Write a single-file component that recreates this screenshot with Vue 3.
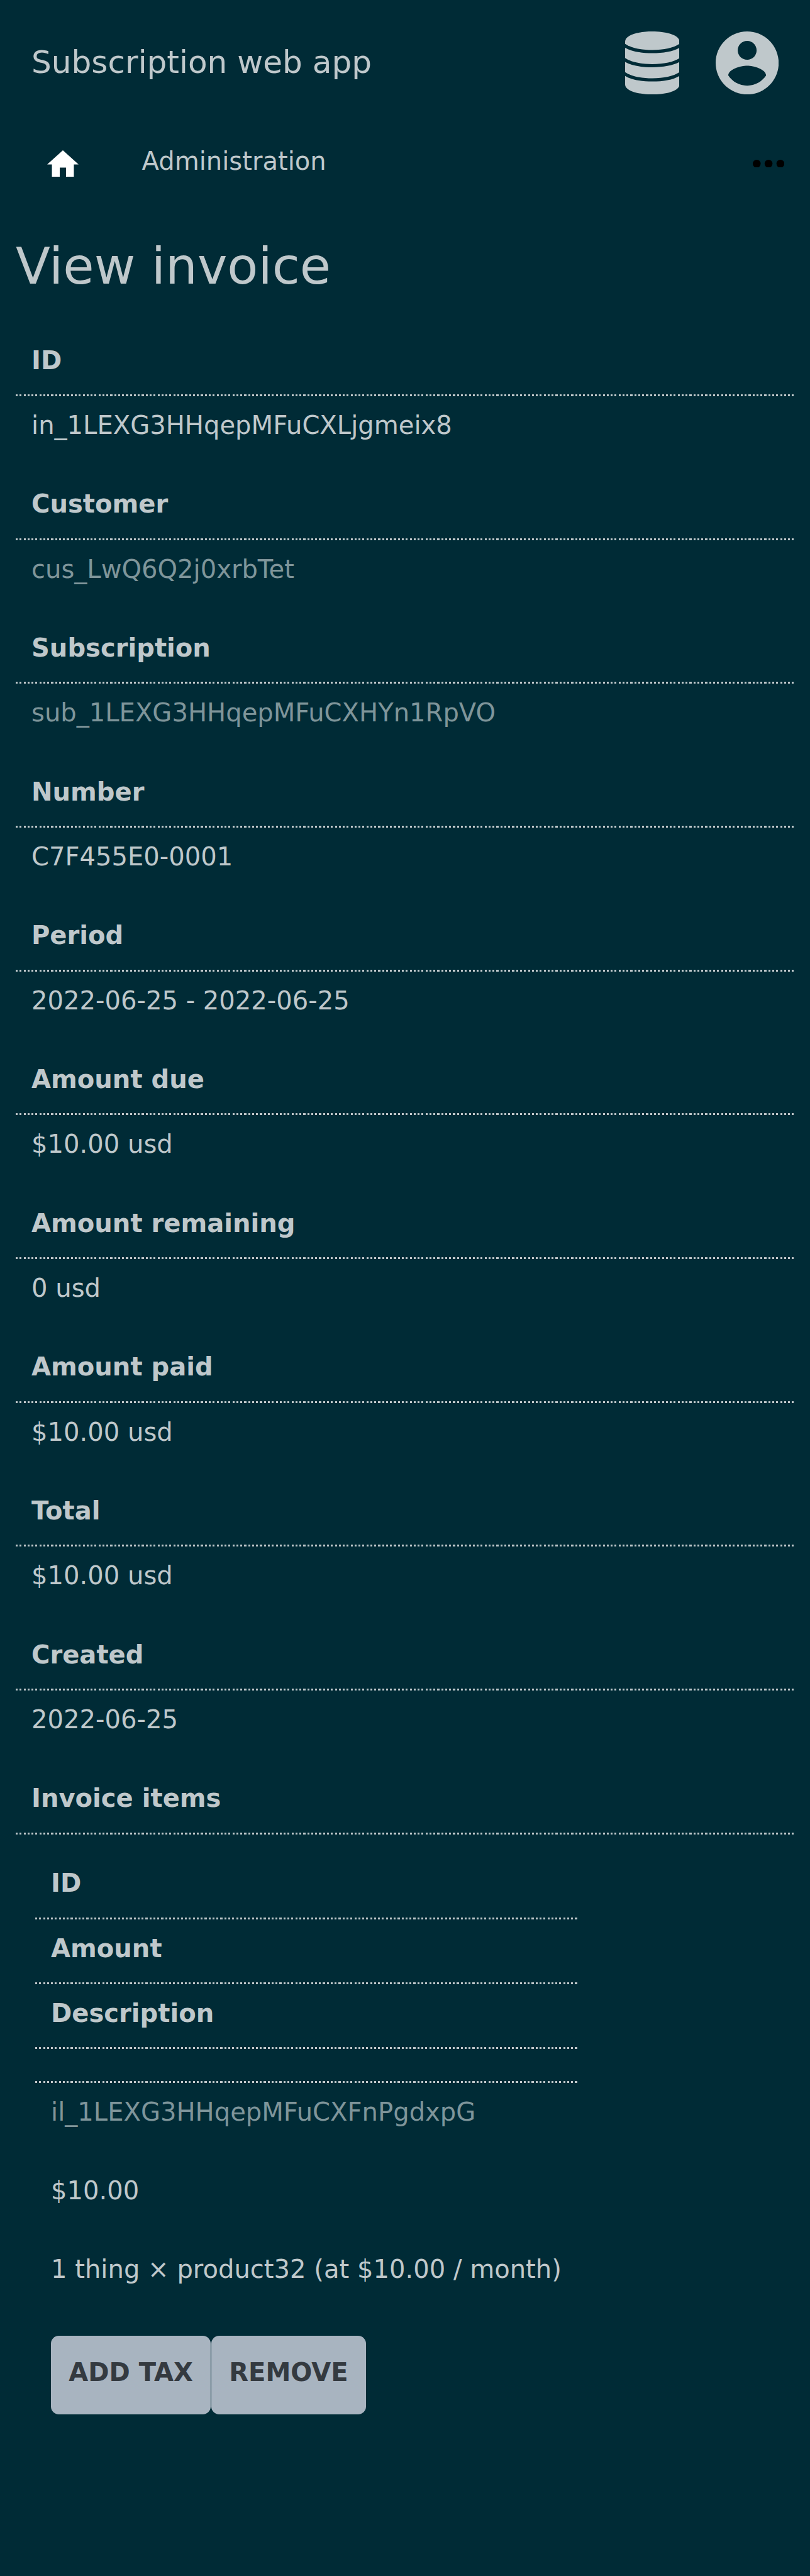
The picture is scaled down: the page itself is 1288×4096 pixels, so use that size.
<script setup>
const fields = [
  { label: 'ID', value: 'in_1LEXG3HHqepMFuCXLjgmeix8' },
  { label: 'Customer', value: 'cus_LwQ6Q2j0xrbTet', link: true },
  { label: 'Subscription', value: 'sub_1LEXG3HHqepMFuCXHYn1RpVO', link: true },
  { label: 'Number', value: 'C7F455E0-0001' },
  { label: 'Period', value: '2022-06-25 - 2022-06-25' },
  { label: 'Amount due', value: '$10.00 usd' },
  { label: 'Amount remaining', value: '0 usd' },
  { label: 'Amount paid', value: '$10.00 usd' },
  { label: 'Total', value: '$10.00 usd' },
  { label: 'Created', value: '2022-06-25' },
]
const itemColumns = ['ID', 'Amount', 'Description', '']
</script>

<template>
  <div class="page">
    <header class="header">
      <div class="brand">Subscription web app</div>
      <div class="tools">
        <svg class="database" viewBox="0 0 290 336" aria-hidden="true">
          <path d="M0 54C0 20 68 0 145 0s145 20 145 54v12c-28 20-83 33-145 33S28 86 0 66z" />
          <path d="M0 87c34 20 86 29 145 29s111-9 145-29v55c-28 20-83 32-145 32S28 162 0 142z" />
          <path d="M0 163c34 19 86 28 145 28s111-9 145-28v54c-28 20-83 33-145 33S28 237 0 217z" />
          <path d="M0 237c34 21 86 30 145 30s111-9 145-30v46c0 32-65 53-145 53S0 315 0 283z" />
        </svg>
        <svg class="account" viewBox="2 2 20 20" aria-hidden="true">
          <path d="M12 2C6.48 2 2 6.48 2 12s4.48 10 10 10 10-4.48 10-10S17.52 2 12 2zm0 3c1.66 0 3 1.34 3 3s-1.34 3-3 3-3-1.34-3-3 1.34-3 3-3zm0 14.2c-2.5 0-4.71-1.28-6-3.22.03-1.99 4-3.08 6-3.08 1.99 0 5.97 1.09 6 3.08-1.29 1.94-3.5 3.22-6 3.22z" />
        </svg>
      </div>
    </header>
    <nav class="nav">
      <svg class="home" viewBox="2 3 20 17" aria-hidden="true">
        <path d="M10 20v-6h4v6h5v-8h3L12 3 2 12h3v8z" />
      </svg>
      <a class="crumb">Administration</a>
      <svg class="more" viewBox="0 0 56 14" aria-hidden="true">
        <circle cx="7" cy="7" r="7" />
        <circle cx="28" cy="7" r="7" />
        <circle cx="49" cy="7" r="7" />
      </svg>
    </nav>
    <main>
      <h1>View invoice</h1>
      <dl class="fields">
        <template v-for="f in fields" :key="f.label">
          <dt class="label">{{ f.label }}</dt>
          <dd class="value" :class="{ link: f.link }">{{ f.value }}</dd>
        </template>
        <dt class="label">Invoice items</dt>
      </dl>
      <section class="items">
        <div v-for="(c, i) in itemColumns" :key="i" class="label" :class="{ blank: !c }">{{ c }}</div>
        <div class="cell link">il_1LEXG3HHqepMFuCXFnPgdxpG</div>
        <div class="cell">$10.00</div>
        <div class="cell">1 thing × product32 (at $10.00 / month)</div>
        <div class="actions">
          <button type="button">ADD TAX</button>
          <button type="button">REMOVE</button>
        </div>
      </section>
    </main>
  </div>
</template>

<style>
html,
body {
  margin: 0;
  background: #002b36;
}
</style>

<style scoped>
.page {
  --u: 3.13276px;
  box-sizing: border-box;
  height: 4096px;
  overflow: hidden;
  background: #002b36;
  color: #bfc8cb;
  font-family: "DejaVu Sans", sans-serif;
  font-size: calc(12.8 * var(--u));
  line-height: 50px;
  white-space: nowrap;
}
.page svg {
  display: block;
  fill: #bfc8cb;
}
.header {
  box-sizing: border-box;
  display: flex;
  justify-content: space-between;
  align-items: center;
  height: 200.5px;
  padding: 0 50px;
}
.brand {
  margin-bottom: 2px;
  font-size: calc(16 * var(--u));
  line-height: 60px;
}
.tools {
  display: flex;
  gap: 57.5px;
}
.database {
  width: 86.5px;
  height: 100.2px;
}
.account {
  width: 100.2px;
  height: 100.2px;
}
.nav {
  box-sizing: border-box;
  display: flex;
  align-items: flex-start;
  height: 156.5px;
  padding: 29.5px 41px 0 75px;
}
.page .home {
  width: 50px;
  height: 42.4px;
  margin-top: 9px;
  fill: #fff;
}
.crumb {
  margin: 1px 0 0 100.5px;
}
.page .more {
  width: 50.2px;
  height: 12.6px;
  margin: 23.5px 0 0 auto;
  fill: #000;
}
h1 {
  box-sizing: border-box;
  margin: 0;
  padding: 17px 25px 0;
  height: 169.7px;
  font-size: calc(25.6 * var(--u));
  font-weight: 400;
  line-height: 100px;
}
.fields {
  margin: 0;
  padding: 0 25px;
}
.label {
  box-sizing: border-box;
  height: calc(33 * var(--u));
  padding: 21px 25px 0;
  font-weight: 700;
  background: repeating-linear-gradient(90deg, #bfc8cb 0 3.13276px, transparent 3.13276px 6.26552px) left bottom / 100% 3px no-repeat;
}
.value {
  box-sizing: border-box;
  height: calc(40 * var(--u));
  margin: 0;
  padding: 21px 25px 0;
}
.link {
  color: #7f959a;
}
.items {
  width: 862px;
  margin: 31.5px 0 0 56px;
}
.label.blank {
  height: calc(17 * var(--u));
}
.cell {
  box-sizing: border-box;
  height: calc(40 * var(--u));
  padding: 21px 25px 0;
}
.actions {
  display: flex;
  gap: 1px;
  padding: 26px 25px 0;
}
button {
  box-sizing: border-box;
  height: 125px;
  margin: 0;
  padding: 0 28.2px 8px;
  border: 0;
  border-radius: 12.5px;
  background: #a8b4c0;
  color: #343a40;
  font: inherit;
  font-weight: 700;
}
</style>
